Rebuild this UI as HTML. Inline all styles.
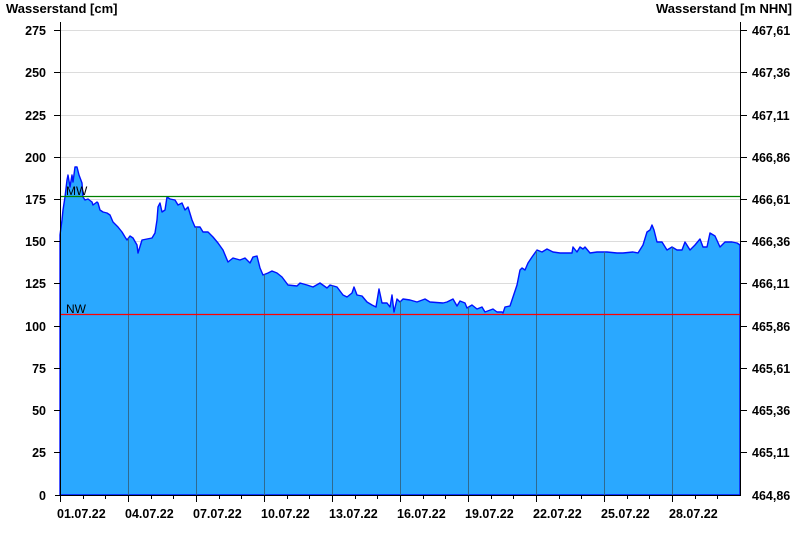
<!DOCTYPE html>
<html><head><meta charset="utf-8"><style>
body{margin:0;background:#fff;}
svg{display:block;font-family:"Liberation Sans",Arial,sans-serif;}
.b{font-weight:bold;font-size:13px;fill:#000;}
.t{font-weight:bold;font-size:12.5px;fill:#000;}
</style></head><body>
<svg width="800" height="550" viewBox="0 0 800 550">
<defs>
<clipPath id="c"><polygon id="pp" points="60,495 60,235 62,220 63,210 65,197 67,180 68,175 70,187 72,175 73,182 75,167 77,167 79,175 82,183 83,197 85,200 88,199 92,202 93,205 97,202 98,203 100,210 103,212 107,213 110,215 113,222 118,227 122,232 125,237 127,240 130,236 133,238 137,245 138,253 142,240 147,239 152,238 155,233 157,220 158,207 160,203 162,212 165,210 167,197 170,199 175,200 178,205 182,203 185,210 188,207 192,220 195,227 200,227 203,232 208,232 213,237 218,243 223,250 228,262 233,258 240,260 245,258 250,263 253,257 257,256 260,268 263,275 268,273 272,271 277,273 282,277 288,285 297,286 300,283 307,285 313,287 320,283 327,288 330,285 337,287 343,295 347,297 352,293 354,287 357,295 362,296 367,302 372,305 376,307 379,289 382,303 387,303 390,307 392,295 394,312 397,299 400,302 403,299 410,300 417,302 425,299 430,302 443,303 447,302 453,299 457,306 460,301 465,303 467,308 472,305 477,309 482,307 485,312 493,309 497,312 502,312 503,313 505,307 510,306 513,297 517,285 520,270 522,268 525,270 528,263 532,257 537,250 542,252 547,249 553,252 560,253 572,253 573,247 577,252 580,247 583,249 585,247 590,253 597,252 607,252 617,253 623,253 633,252 638,253 643,245 647,232 650,230 652,225 654,230 657,242 662,242 667,250 672,247 677,250 682,250 685,242 690,250 695,245 700,239 703,247 707,247 710,233 715,236 720,247 725,242 732,242 737,243 740,245 740,495"/></clipPath>
</defs>
<g stroke="#dcdcdc" stroke-width="1">
<line x1="60" x2="740" y1="30.5" y2="30.5"/><line x1="60" x2="740" y1="72.5" y2="72.5"/><line x1="60" x2="740" y1="115.5" y2="115.5"/><line x1="60" x2="740" y1="157.5" y2="157.5"/><line x1="60" x2="740" y1="199.5" y2="199.5"/><line x1="60" x2="740" y1="241.5" y2="241.5"/><line x1="60" x2="740" y1="283.5" y2="283.5"/>
</g>
<use href="#pp" fill="#2aa8ff" stroke="#0010ff" stroke-width="1.4" stroke-linejoin="round"/>
<g clip-path="url(#c)" stroke="#2f6a90" stroke-width="1">
<line x1="128.5" x2="128.5" y1="0" y2="495"/><line x1="196.5" x2="196.5" y1="0" y2="495"/><line x1="264.5" x2="264.5" y1="0" y2="495"/><line x1="332.5" x2="332.5" y1="0" y2="495"/><line x1="400.5" x2="400.5" y1="0" y2="495"/><line x1="468.5" x2="468.5" y1="0" y2="495"/><line x1="536.5" x2="536.5" y1="0" y2="495"/><line x1="604.5" x2="604.5" y1="0" y2="495"/><line x1="672.5" x2="672.5" y1="0" y2="495"/>
</g>
<line x1="60" x2="740" y1="196.5" y2="196.5" stroke="#008000" stroke-width="1.2"/>
<line x1="60" x2="740" y1="314.5" y2="314.5" stroke="#ff0000" stroke-width="1.2"/>
<text x="66" y="195" font-size="12" fill="#000">MW</text>
<text x="66" y="313" font-size="12" fill="#000">NW</text>
<g stroke="#000" stroke-width="1">
<line x1="60.5" x2="60.5" y1="22" y2="496"/>
<line x1="740.5" x2="740.5" y1="22" y2="496"/>
<line x1="55" x2="741" y1="495.5" y2="495.5"/>
</g>
<g stroke="#000" stroke-width="1" id="lt">
<line x1="54" x2="60" y1="30.5" y2="30.5"/><line x1="54" x2="60" y1="72.5" y2="72.5"/><line x1="54" x2="60" y1="115.5" y2="115.5"/><line x1="54" x2="60" y1="157.5" y2="157.5"/><line x1="54" x2="60" y1="199.5" y2="199.5"/><line x1="54" x2="60" y1="241.5" y2="241.5"/><line x1="54" x2="60" y1="283.5" y2="283.5"/><line x1="54" x2="60" y1="326.5" y2="326.5"/><line x1="54" x2="60" y1="368.5" y2="368.5"/><line x1="54" x2="60" y1="410.5" y2="410.5"/><line x1="54" x2="60" y1="452.5" y2="452.5"/>
</g>
<use href="#lt" transform="translate(1,0) scale(1,1)" x="686"/>
<g stroke="#000" stroke-width="1">
<line x1="60.5" x2="60.5" y1="495" y2="502"/><line x1="128.5" x2="128.5" y1="495" y2="502"/><line x1="196.5" x2="196.5" y1="495" y2="502"/><line x1="264.5" x2="264.5" y1="495" y2="502"/><line x1="332.5" x2="332.5" y1="495" y2="502"/><line x1="400.5" x2="400.5" y1="495" y2="502"/><line x1="468.5" x2="468.5" y1="495" y2="502"/><line x1="536.5" x2="536.5" y1="495" y2="502"/><line x1="604.5" x2="604.5" y1="495" y2="502"/><line x1="672.5" x2="672.5" y1="495" y2="502"/>
<line x1="83.5" x2="83.5" y1="495" y2="499"/><line x1="105.5" x2="105.5" y1="495" y2="499"/><line x1="151.5" x2="151.5" y1="495" y2="499"/><line x1="173.5" x2="173.5" y1="495" y2="499"/><line x1="219.5" x2="219.5" y1="495" y2="499"/><line x1="241.5" x2="241.5" y1="495" y2="499"/><line x1="287.5" x2="287.5" y1="495" y2="499"/><line x1="309.5" x2="309.5" y1="495" y2="499"/><line x1="355.5" x2="355.5" y1="495" y2="499"/><line x1="377.5" x2="377.5" y1="495" y2="499"/><line x1="423.5" x2="423.5" y1="495" y2="499"/><line x1="445.5" x2="445.5" y1="495" y2="499"/><line x1="491.5" x2="491.5" y1="495" y2="499"/><line x1="513.5" x2="513.5" y1="495" y2="499"/><line x1="559.5" x2="559.5" y1="495" y2="499"/><line x1="581.5" x2="581.5" y1="495" y2="499"/><line x1="627.5" x2="627.5" y1="495" y2="499"/><line x1="649.5" x2="649.5" y1="495" y2="499"/><line x1="695.5" x2="695.5" y1="495" y2="499"/><line x1="717.5" x2="717.5" y1="495" y2="499"/>
</g>
<text class="b" x="6" y="13">Wasserstand [cm]</text>
<text class="b" x="792" y="13" text-anchor="end">Wasserstand [m NHN]</text>
<g class="t" text-anchor="end">
<text x="46" y="35">275</text><text x="46" y="77">250</text><text x="46" y="120">225</text><text x="46" y="162">200</text><text x="46" y="204">175</text><text x="46" y="246">150</text><text x="46" y="288">125</text><text x="46" y="331">100</text><text x="46" y="373">75</text><text x="46" y="415">50</text><text x="46" y="457">25</text><text x="46" y="500">0</text>
</g>
<g class="t">
<text x="752" y="35">467,61</text><text x="752" y="77">467,36</text><text x="752" y="120">467,11</text><text x="752" y="162">466,86</text><text x="752" y="204">466,61</text><text x="752" y="246">466,36</text><text x="752" y="288">466,11</text><text x="752" y="331">465,86</text><text x="752" y="373">465,61</text><text x="752" y="415">465,36</text><text x="752" y="457">465,11</text><text x="752" y="500">464,86</text>
</g>
<g class="t">
<text x="57" y="518">01.07.22</text><text x="125" y="518">04.07.22</text><text x="193" y="518">07.07.22</text><text x="261" y="518">10.07.22</text><text x="329" y="518">13.07.22</text><text x="397" y="518">16.07.22</text><text x="465" y="518">19.07.22</text><text x="533" y="518">22.07.22</text><text x="601" y="518">25.07.22</text><text x="669" y="518">28.07.22</text>
</g>
</svg>
</body></html>
